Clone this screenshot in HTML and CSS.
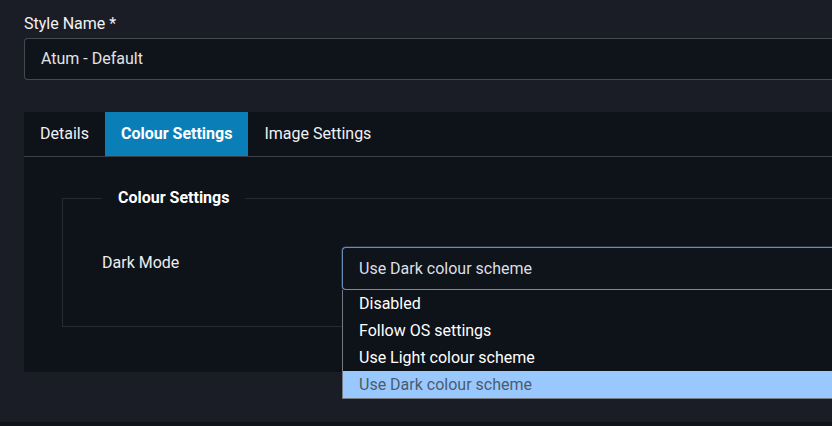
FILE: index.html
```html
<!DOCTYPE html>
<html>
<head>
<meta charset="utf-8">
<link rel="stylesheet" href="styles.css">
</head>
<body>
<div class="page">
  <div class="wrap">
    <label class="field-label">Style Name *</label>
    <div class="text-input">Atum - Default</div>

    <div class="tabs">
      <div class="tab-bar">
        <div class="tab">Details</div>
        <div class="tab active">Colour Settings</div>
        <div class="tab">Image Settings</div>
      </div>
      <div class="tab-panel">
        <fieldset class="group">
          <legend class="group-title">Colour Settings</legend>
          <div class="row">
            <div class="row-label">Dark Mode</div>
            <div class="select-wrap">
              <div class="select">Use Dark colour scheme</div>
              <ul class="options">
                <li class="option">Disabled</li>
                <li class="option">Follow OS settings</li>
                <li class="option">Use Light colour scheme</li>
                <li class="option selected">Use Dark colour scheme</li>
              </ul>
            </div>
          </div>
        </fieldset>
      </div>
    </div>
  </div>
  <div class="footer-bar"></div>
</div>
</body>
</html>
```

FILE: styles.css
```css
html, body {
  margin: 0;
  padding: 0;
  overflow: hidden;
  background: #1b1d26;
}
body {
  font-family: Roboto, "Liberation Sans", sans-serif;
  font-size: 16px;
  color: #e8eaed;
}
.page {
  height: 426px;
}
.wrap {
  padding: 12px 0 0 24px;
}
.field-label {
  display: block;
  line-height: 24px;
  height: 24px;
  margin-bottom: 2px;
  color: #f1f2f4;
}
.text-input {
  box-sizing: border-box;
  height: 42px;
  line-height: 40px;
  padding-left: 16px;
  background: #0f131a;
  border: 1px solid #454851;
  border-right: none;
  border-radius: 4px 0 0 4px;
  color: #e2e3e6;
}
.tabs {
  margin-top: 32px;
  background: #0e1219;
}
.tab-bar {
  display: flex;
  height: 44px;
  border-bottom: 1px solid #3b3e47;
}
.tab {
  padding: 0 16px;
  line-height: 44px;
  color: #f0f1f3;
}
.tab.active {
  background: #0a7fb7;
  font-weight: 700;
  color: #ffffff;
}
.tab-panel {
  padding: 29px 0 45px 38px;
}
.group {
  margin: 0;
  padding: 37px 0 36px 39px;
  border: 1px solid #262a33;
  border-right: none;
  min-width: 0;
}
.group-title {
  padding: 0 16px;
  line-height: 24px;
  font-weight: 700;
  color: #ffffff;
}
.row {
  display: flex;
}
.row-label {
  width: 240px;
  padding-top: 4px;
  line-height: 24px;
  color: #eceef0;
}
.select-wrap {
  position: relative;
  flex: 1;
}
.select {
  box-sizing: border-box;
  height: 43px;
  line-height: 41px;
  padding-left: 16px;
  background: #0f131a;
  border: 1px solid #6a8db8;
  border-right: none;
  border-radius: 4px 0 0 4px;
  box-shadow: -1px 0 0 0 rgba(70, 110, 160, 0.35), 0 -1px 0 0 rgba(70, 110, 160, 0.35);
  color: #dcdfe3;
}
.options {
  position: absolute;
  top: 43px;
  left: 0;
  right: 0;
  margin: 0;
  padding: 0;
  list-style: none;
  background: #0e1219;
  border-left: 1px solid #767a82;
  border-bottom: 1px solid #767a82;
  z-index: 2;
}
.option {
  height: 27px;
  line-height: 27px;
  padding-left: 16px;
  color: #ffffff;
}
.option.selected {
  background: #99c8fe;
  color: #4c5b6d;
}
.footer-bar {
  margin-top: 50px;
  height: 10px;
  background: #12141b;
}
```
